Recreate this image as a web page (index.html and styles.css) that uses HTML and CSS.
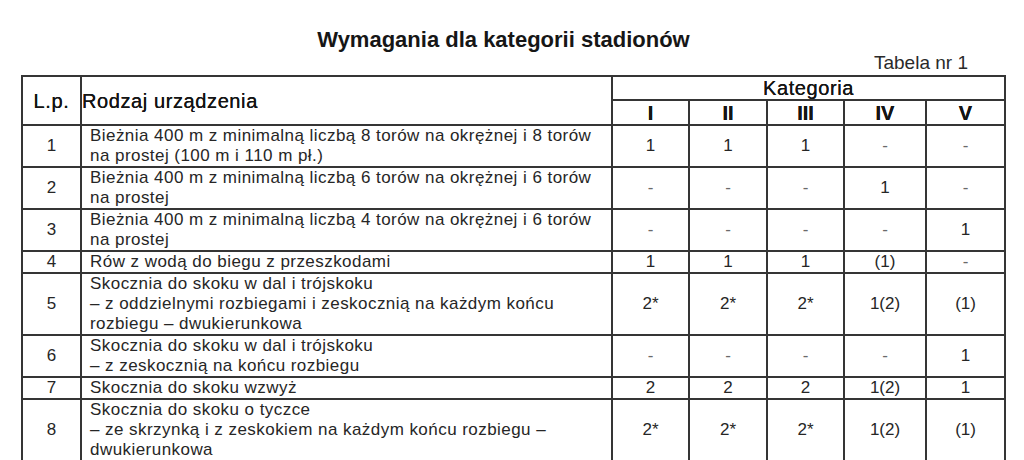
FILE: index.html
```html
<!DOCTYPE html>
<html lang="pl">
<head>
<meta charset="utf-8">
<title>Wymagania dla kategorii stadionów</title>
<link rel="stylesheet" href="styles.css">
</head>
<body>
<div class="page">
  <h1 class="title">Wymagania dla kategorii stadionów</h1>
  <div class="tabno">Tabela nr 1</div>
  <table class="req">
    <colgroup>
      <col class="c-lp">
      <col class="c-name">
      <col class="c-k1">
      <col class="c-k2">
      <col class="c-k3">
      <col class="c-k4">
      <col class="c-k5">
    </colgroup>
    <thead>
      <tr class="hrow1">
        <th rowspan="2" class="h-lp">L.p.</th>
        <th rowspan="2" class="h-name">Rodzaj urządzenia</th>
        <th colspan="5" class="h-kat">Kategoria</th>
      </tr>
      <tr class="hrow2">
        <th class="h-rom">I</th>
        <th class="h-rom">II</th>
        <th class="h-rom">III</th>
        <th class="h-rom">IV</th>
        <th class="h-rom">V</th>
      </tr>
    </thead>
    <tbody>
      <tr>
        <td class="lp">1</td>
        <td class="name">Bieżnia 400 m z minimalną liczbą 8 torów na okrężnej i 8 torów<br>na prostej (100 m i 110 m pł.)</td>
        <td class="v">1</td><td class="v">1</td><td class="v">1</td><td class="v d">-</td><td class="v d">-</td>
      </tr>
      <tr class="r2">
        <td class="lp">2</td>
        <td class="name">Bieżnia 400 m z minimalną liczbą 6 torów na okrężnej i 6 torów<br>na prostej</td>
        <td class="v d">-</td><td class="v d">-</td><td class="v d">-</td><td class="v">1</td><td class="v d">-</td>
      </tr>
      <tr>
        <td class="lp">3</td>
        <td class="name">Bieżnia 400 m z minimalną liczbą 4 torów na okrężnej i 6 torów<br>na prostej</td>
        <td class="v d">-</td><td class="v d">-</td><td class="v d">-</td><td class="v d">-</td><td class="v">1</td>
      </tr>
      <tr class="r1">
        <td class="lp">4</td>
        <td class="name">Rów z wodą do biegu z przeszkodami</td>
        <td class="v">1</td><td class="v">1</td><td class="v">1</td><td class="v">(1)</td><td class="v d">-</td>
      </tr>
      <tr>
        <td class="lp">5</td>
        <td class="name">Skocznia do skoku w dal i trójskoku<br>– z oddzielnymi rozbiegami i zeskocznią na każdym końcu<br>rozbiegu – dwukierunkowa</td>
        <td class="v">2*</td><td class="v">2*</td><td class="v">2*</td><td class="v">1(2)</td><td class="v">(1)</td>
      </tr>
      <tr>
        <td class="lp">6</td>
        <td class="name">Skocznia do skoku w dal i trójskoku<br>– z zeskocznią na końcu rozbiegu</td>
        <td class="v d">-</td><td class="v d">-</td><td class="v d">-</td><td class="v d">-</td><td class="v">1</td>
      </tr>
      <tr>
        <td class="lp">7</td>
        <td class="name">Skocznia do skoku wzwyż</td>
        <td class="v">2</td><td class="v">2</td><td class="v">2</td><td class="v">1(2)</td><td class="v">1</td>
      </tr>
      <tr>
        <td class="lp">8</td>
        <td class="name">Skocznia do skoku o tyczce<br>– ze skrzynką i z zeskokiem na każdym końcu rozbiegu –<br>dwukierunkowa</td>
        <td class="v">2*</td><td class="v">2*</td><td class="v">2*</td><td class="v">1(2)</td><td class="v">(1)</td>
      </tr>
    </tbody>
  </table>
</div>
</body>
</html>
```

FILE: styles.css
```css
html, body {
  margin: 0;
  padding: 0;
  background: #ffffff;
}
body {
  width: 1024px;
  height: 460px;
  overflow: hidden;
  font-family: "Liberation Sans", Arial, sans-serif;
  color: #1c1c1c;
}
.page {
  padding: 27px 0 0 21px;
  width: 985px;
}
.title {
  margin: 0;
  font-size: 22px;
  line-height: 26px;
  font-weight: bold;
  color: #161616;
  text-align: center;
  padding-right: 20px;
}
.tabno {
  font-size: 19px;
  line-height: 20px;
  text-align: right;
  padding-right: 38px;
  margin-bottom: 2px;
  color: #2a2a2a;
}
.req {
  border-collapse: collapse;
  table-layout: fixed;
  width: 985px;
}
.c-lp { width: 59px; }
.c-name { width: 531px; }
.c-k1 { width: 77px; }
.c-k2 { width: 78px; }
.c-k3 { width: 77px; }
.c-k4 { width: 82px; }
.c-k5 { width: 79px; }
.req th, .req td {
  border: 2px solid #353535;
  padding: 0;
  vertical-align: middle;
  white-space: nowrap;
  overflow: hidden;
}
.req th {
  font-weight: normal;
  color: #151515;
  text-shadow: 0 0 0.5px #000;
}
.h-lp, .h-name {
  font-size: 20px;
  line-height: 22px;
  letter-spacing: 0.6px;
  padding-bottom: 2px;
}
.h-lp { text-align: center; }
.h-name { text-align: left; padding-left: 8px; }
.hrow1 { height: 24px; }
.hrow2 { height: 25px; }
.h-kat {
  font-size: 20px;
  line-height: 20px;
  letter-spacing: 0.6px;
  text-align: center;
}
.h-rom {
  font-size: 20px;
  line-height: 20px;
  font-weight: bold !important;
  text-align: center;
}
.req td {
  font-size: 17px;
  line-height: 20px;
  color: #262626;
}
.lp {
  text-align: center;
  font-size: 17px;
}
.name {
  text-align: left;
  padding-left: 8px !important;
  letter-spacing: 0.45px;
}
.v {
  text-align: center;
  font-size: 17px;
}
.req td.d { color: #6a6a6a; }
.r2 td { height: 40px; }
```
